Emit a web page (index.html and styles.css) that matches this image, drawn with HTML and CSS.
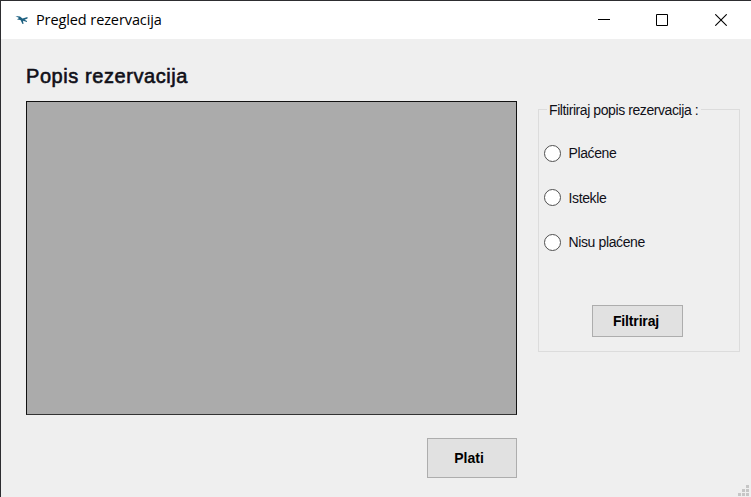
FILE: index.html
```html
<!DOCTYPE html>
<html lang="hr">
<head>
<meta charset="utf-8">
<title>Pregled rezervacija</title>
<link rel="stylesheet" href="styles.css">
</head>
<body>
<div class="window">
  <header class="titlebar">
    <svg class="app-icon" width="14" height="10" viewBox="0 0 14 10"><path d="M.5 1 5 1.500 7.500 3.500 12.500 2v1.500L9.500 4.700 12 6v1L8 5.800 8.500 9H7.500L5.500 5 2 4.500 4 3z" fill="#1d6080"/></svg>
    <h1 class="caption">Pregled rezervacija</h1>
    <div class="controls">
      <svg width="12" height="12" viewBox="0 0 12 12"><path d="M0 5.500h12" stroke="#000"/></svg>
      <svg width="12" height="12" viewBox="0 0 12 12"><path d="M.5.5h11v11H.5z" fill="none" stroke="#000"/></svg>
      <svg class="close" width="12" height="12" viewBox="0 0 12 12"><path d="M.3.3l11.400 11.400M11.700.3L.3 11.700" stroke="#000" stroke-width="1.100"/></svg>
    </div>
  </header>
  <main class="content">
    <section class="list">
      <h2 class="heading">Popis rezervacija</h2>
      <div class="data-grid"></div>
      <button class="button pay"><span>Plati</span></button>
    </section>
    <section class="group">
      <h3 class="legend"><span>Filtiriraj popis rezervacija :</span></h3>
      <div class="options">
        <label class="option"><i class="radio"></i><span>Plaćene</span></label>
        <label class="option"><i class="radio"></i><span>Istekle</span></label>
        <label class="option"><i class="radio"></i><span>Nisu plaćene</span></label>
      </div>
      <button class="button filter"><span>Filtriraj</span></button>
    </section>
  </main>
  <svg class="grip" width="11" height="11" viewBox="0 0 11 11"><path d="M8 0h3v3H8zM4 4h3v3H4zM8 4h3v3H8zM0 8h3v3H0zM4 8h3v3H4zM8 8h3v3H8z" fill="#c6c6c6"/></svg>
</div>
</body>
</html>
```
FILE: styles.css
```css
* { box-sizing: border-box; }
body { margin: 0; overflow: hidden; color: #101018; font-family: "Liberation Sans", Arial, sans-serif; }
h1, h2, h3 { margin: 0; font-weight: 400; white-space: nowrap; }
svg { display: block; }
.window { position: relative; width: 751px; height: 497px; background: #efefef; border: solid #2d2d30; border-width: 1px 0 0 1px; }
.titlebar { display: flex; align-items: center; height: 38px; padding: 0 24px 0 14px; background: #fff; }
.app-icon { flex: none; }
.caption { margin-left: 7px; font: 14.500px/20px "Open Sans", "Segoe UI", sans-serif; letter-spacing: -.1px; color: #000; }
.controls { display: flex; gap: 46px; margin-left: auto; }
.close { margin-left: 1px; }
.content { display: flex; align-items: flex-start; padding: 26px 11px 0 25px; }
.list { display: flex; flex-direction: column; width: 491px; }
.heading { height: 36px; font-size: 20px; line-height: 22px; letter-spacing: .57px; -webkit-text-stroke: .6px #101018; }
.data-grid { height: 314px; background: #ababab; border: 1px solid #111; border-bottom-color: #333; }
.button { padding: 0; border: 1px solid #adadad; background: #e1e1e1; color: #000; font: 700 14px/20px "Liberation Sans", Arial, sans-serif; }
.button span { display: inline-block; }
.pay { align-self: flex-end; width: 90px; height: 40px; margin-top: 23px; letter-spacing: 0; }
.pay span { transform: translateX(-3px); }
.group { width: 202px; height: 243px; margin: 44px 0 0 21px; border: 1px solid #dcdcdc; }
.legend { height: 20px; margin: -10px 0 0 8px; font-size: 14px; line-height: 20px; letter-spacing: -.42px; }
.legend span { display: inline-block; padding: 0 3px 0 2px; background: #efefef; }
.options { display: flex; flex-direction: column; gap: 24.500px; padding: 23px 0 0 5px; }
.option { display: flex; align-items: center; height: 20px; gap: 7.500px; font-size: 14px; line-height: 20px; letter-spacing: -.38px; }
.radio { width: 17px; height: 17px; border: 1.300px solid #505050; border-radius: 50%; background: #fff; }
.filter { display: block; width: 91px; height: 32px; margin: 53px 0 0 53px; letter-spacing: -.15px; }
.filter span { transform: translateX(-1.500px); }
.grip { position: absolute; right: 2px; bottom: 1px; }
```
